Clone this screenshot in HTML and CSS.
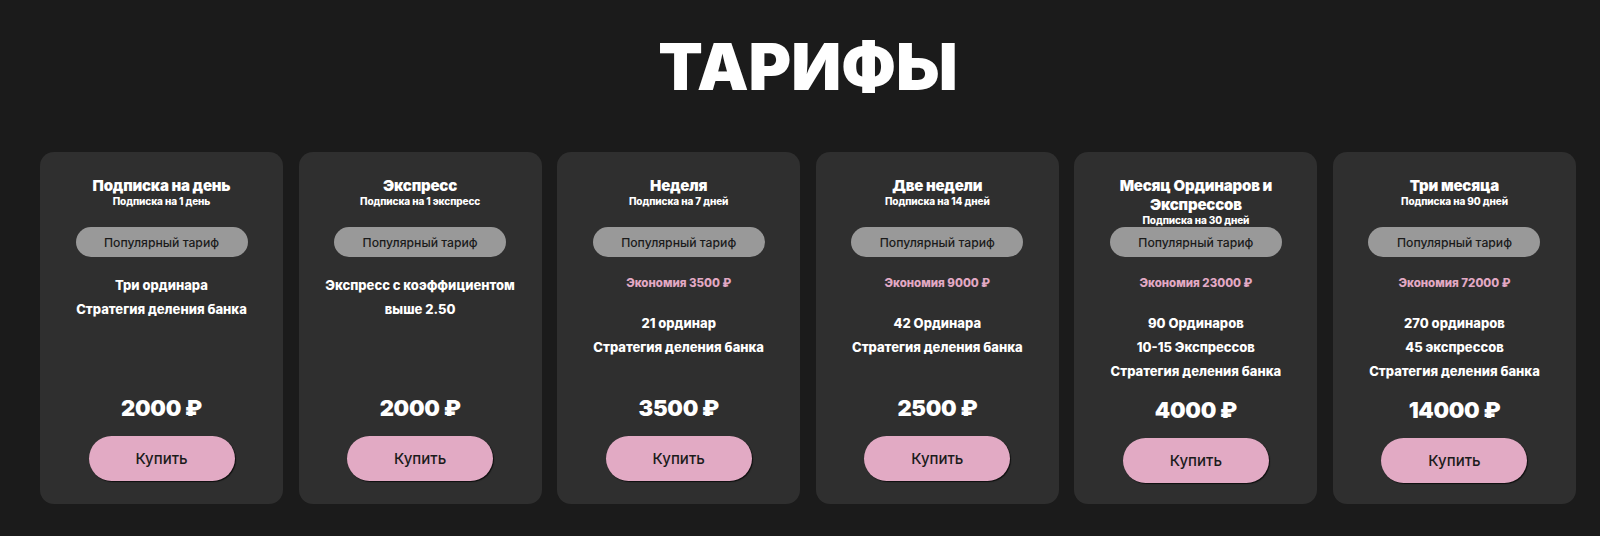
FILE: index.html
```html
<!DOCTYPE html>
<html lang="ru">
<head>
<meta charset="utf-8">
<title>Тарифы</title>
<link rel="stylesheet" href="styles.css">
</head>
<body>
<section class="tariffs">
  <h1 class="tariffs__title">ТАРИФЫ</h1>
  <div class="tariffs__grid">
    <div class="card">
      <div class="card__head">
        <h3 class="card__name">Подписка на день</h3>
        <div class="card__sub">Подписка на 1 день</div>
      </div>
      <div class="card__badge">Популярный тариф</div>
      <div class="card__body">
        <ul class="card__features">
          <li>Три ординара</li>
          <li>Стратегия деления банка</li>
        </ul>
      </div>
      <div class="card__price">2000 ₽</div>
      <button class="card__btn">Купить</button>
    </div>
    <div class="card">
      <div class="card__head">
        <h3 class="card__name">Экспресс</h3>
        <div class="card__sub">Подписка на 1 экспресс</div>
      </div>
      <div class="card__badge">Популярный тариф</div>
      <div class="card__body">
        <ul class="card__features card__features--narrow">
          <li>Экспресс с коэффициентом выше 2.50</li>
        </ul>
      </div>
      <div class="card__price">2000 ₽</div>
      <button class="card__btn">Купить</button>
    </div>
    <div class="card">
      <div class="card__head">
        <h3 class="card__name">Неделя</h3>
        <div class="card__sub">Подписка на 7 дней</div>
      </div>
      <div class="card__badge">Популярный тариф</div>
      <div class="card__body">
        <div class="card__save">Экономия 3500 ₽</div>
        <ul class="card__features">
          <li>21 ординар</li>
          <li>Стратегия деления банка</li>
        </ul>
      </div>
      <div class="card__price">3500 ₽</div>
      <button class="card__btn">Купить</button>
    </div>
    <div class="card">
      <div class="card__head">
        <h3 class="card__name">Две недели</h3>
        <div class="card__sub">Подписка на 14 дней</div>
      </div>
      <div class="card__badge">Популярный тариф</div>
      <div class="card__body">
        <div class="card__save">Экономия 9000 ₽</div>
        <ul class="card__features">
          <li>42 Ординара</li>
          <li>Стратегия деления банка</li>
        </ul>
      </div>
      <div class="card__price">2500 ₽</div>
      <button class="card__btn">Купить</button>
    </div>
    <div class="card">
      <div class="card__head">
        <h3 class="card__name card__name--wrap">Месяц Ординаров и Экспрессов</h3>
        <div class="card__sub">Подписка на 30 дней</div>
      </div>
      <div class="card__badge">Популярный тариф</div>
      <div class="card__body">
        <div class="card__save">Экономия 23000 ₽</div>
        <ul class="card__features">
          <li>90 Ординаров</li>
          <li>10-15 Экспрессов</li>
          <li>Стратегия деления банка</li>
        </ul>
      </div>
      <div class="card__price">4000 ₽</div>
      <button class="card__btn">Купить</button>
    </div>
    <div class="card">
      <div class="card__head">
        <h3 class="card__name">Три месяца</h3>
        <div class="card__sub">Подписка на 90 дней</div>
      </div>
      <div class="card__badge">Популярный тариф</div>
      <div class="card__body">
        <div class="card__save">Экономия 72000 ₽</div>
        <ul class="card__features">
          <li>270 ординаров</li>
          <li>45 экспрессов</li>
          <li>Стратегия деления банка</li>
        </ul>
      </div>
      <div class="card__price">14000 ₽</div>
      <button class="card__btn">Купить</button>
    </div>
  </div>
</section>
</body>
</html>
```

FILE: styles.css
```css
* { box-sizing: border-box; }

html, body {
  margin: 0;
  padding: 0;
  background: #1b1b1b;
  color: #ffffff;
  font-family: "Inter", "Noto Sans", sans-serif;
}

.tariffs {
  padding: 27px 24px 0 40px;
}

.tariffs__title {
  margin: 0;
  text-align: center;
  font-size: 65px;
  line-height: 80px;
  font-weight: 900;
  letter-spacing: 0;
  color: #ffffff;
}

.tariffs__grid {
  margin-top: 45px;
  display: grid;
  grid-template-columns: repeat(6, 1fr);
  column-gap: 15.6px;
}

.card {
  display: flex;
  flex-direction: column;
  align-items: center;
  text-align: center;
  background: #2f2f2f;
  border-radius: 14px;
  padding: 24px 12px 21px;
}

.card__head {
  height: 51px;
  display: flex;
  flex-direction: column;
  align-items: center;
}

.card__name {
  margin: 0;
  font-size: 15px;
  line-height: 19px;
  font-weight: 900;
  letter-spacing: -0.2px;
}

.card__name--wrap {
  max-width: 185px;
}

.card__sub {
  font-size: 10px;
  line-height: 12px;
  font-weight: 800;
  letter-spacing: -0.1px;
}

.card__badge {
  width: 172px;
  height: 30px;
  border-radius: 15px;
  background: #999999;
  color: #1b1b1b;
  font-size: 12.2px;
  font-weight: 500;
  display: flex;
  align-items: center;
  justify-content: center;
}

.card__body {
  min-height: 124px;
  padding-top: 16px;
  display: flex;
  flex-direction: column;
  align-items: center;
}

.card__save {
  font-size: 11.5px;
  line-height: 20px;
  font-weight: 800;
  color: #e2a9c4;
  margin-bottom: 18px;
}

.card__features {
  list-style: none;
  margin: 0;
  padding: 0;
  font-size: 13px;
  line-height: 24px;
  font-weight: 800;
}

.card__features--narrow {
  max-width: 200px;
}

.card__price {
  margin-top: 14px;
  font-size: 22px;
  line-height: 26px;
  font-weight: 900;
  letter-spacing: -0.3px;
}

.card__btn {
  margin-top: 15px;
  width: 146px;
  height: 45px;
  border: none;
  border-radius: 23px;
  background: #e2aac4;
  color: #1b1b1b;
  font-family: "Inter", "Noto Sans", sans-serif;
  font-size: 15px;
  font-weight: 500;
  box-shadow: 1px 1px 1px rgba(0, 0, 0, 0.7);
  cursor: pointer;
}
```
